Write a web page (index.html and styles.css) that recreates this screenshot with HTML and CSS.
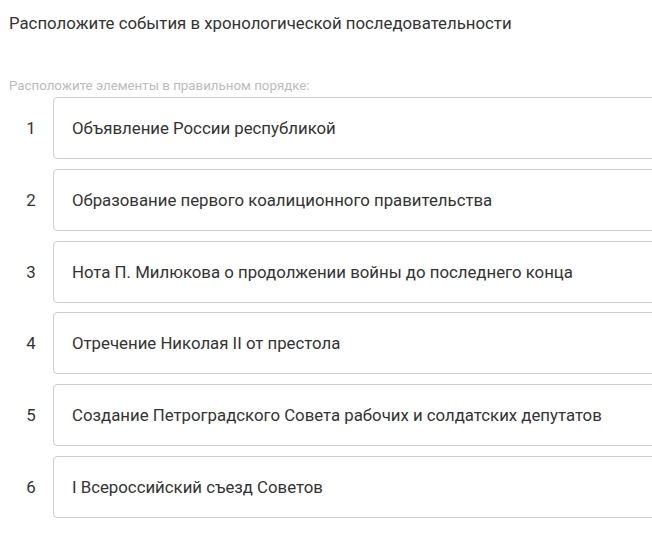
FILE: index.html
```html
<!DOCTYPE html>
<html lang="ru">
<head>
<meta charset="utf-8">
<link rel="stylesheet" href="styles.css">
</head>
<body>
<div class="page">
  <h1 class="title">Расположите события в хронологической последовательности</h1>
  <p class="hint">Расположите элементы в правильном порядке:</p>
  <ol class="list">
    <li class="row"><span class="num">1</span><div class="card">Объявление России республикой</div></li>
    <li class="row"><span class="num">2</span><div class="card">Образование первого коалиционного правительства</div></li>
    <li class="row"><span class="num">3</span><div class="card">Нота П. Милюкова о продолжении войны до последнего конца</div></li>
    <li class="row"><span class="num">4</span><div class="card">Отречение Николая II от престола</div></li>
    <li class="row"><span class="num">5</span><div class="card">Создание Петроградского Совета рабочих и солдатских депутатов</div></li>
    <li class="row"><span class="num">6</span><div class="card">I Всероссийский съезд Советов</div></li>
  </ol>
</div>
</body>
</html>
```
FILE: styles.css
```css
html, body {
  margin: 0;
  padding: 0;
  background: #fff;
  overflow: hidden;
}
.page {
  width: 720px;
  padding: 13px 0 0 9px;
  font-family: Roboto, "Noto Sans", sans-serif;
  color: #333;
}
.title {
  margin: 0;
  font-size: 16.8px;
  font-weight: 400;
  line-height: 21px;
  color: #333;
}
.hint {
  margin: 44px 0 0 0;
  font-size: 13.3px;
  line-height: 16px;
  color: #bbb;
}
.list {
  list-style: none;
  margin: 3px 0 0 0;
  padding: 0;
}
.row {
  display: flex;
  align-items: center;
  margin-bottom: 9.8px;
}
.num {
  width: 44px;
  text-align: center;
  font-size: 16.8px;
  color: #333;
}
.card {
  flex: 1;
  height: 60px;
  border: 1px solid #ccc;
  border-radius: 4px;
  display: flex;
  align-items: center;
  padding-left: 18px;
  font-size: 16.8px;
  color: #333;
  box-sizing: content-box;
}
```
